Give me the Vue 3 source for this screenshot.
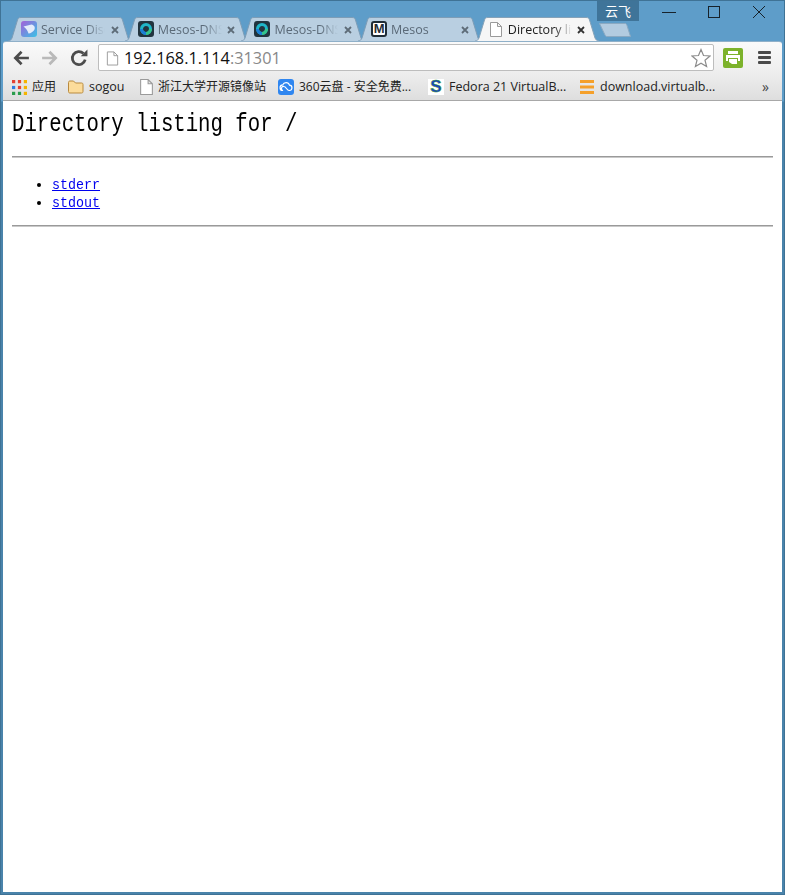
<script setup>
const tabs = [
  { title: 'Service Discovery', icon: 'service' },
  { title: 'Mesos-DNS', icon: 'dns' },
  { title: 'Mesos-DNS', icon: 'dns' },
  { title: 'Mesos', icon: 'mesos' },
  { title: 'Directory listing for /', icon: 'doc', active: true }
]
const bookmarks = [
  { label: '应用', icon: 'apps', width: 56, cjk: true },
  { label: 'sogou', icon: 'folder', width: 72 },
  { label: '浙江大学开源镜像站', icon: 'doc', width: 138, cjk: true },
  { label: '360云盘 - 安全免费...', icon: 'cloud', width: 150, cjk: true },
  { label: 'Fedora 21 VirtualB...', icon: 'fedora', width: 151 },
  { label: 'download.virtualb...', icon: 'stack', width: 140 }
]
const appColors = ['#e34133', '#e34133', '#f5b400', '#2f7de1', '#e34133', '#f5b400', '#2b9d4c', '#2b9d4c', '#f5b400']
const files = ['stderr', 'stdout']
</script>

<template>
  <div class="window">
    <div class="caption">
      <div class="tabstrip">
        <div v-for="(tab, i) in tabs" :key="i" class="tab" :class="{ active: tab.active }">
          <svg class="tab-bg" viewBox="0 0 124 24" preserveAspectRatio="none">
            <path d="M0 24C2 24 3 23 4 21L9.500 3C10 1 11 .5 13 .5H111C113 .5 114 1 114.500 3L120 21C121 23 122 24 124 24" />
          </svg>
          <svg v-if="tab.icon === 'service'" class="ico" viewBox="0 0 16 16">
            <defs>
              <linearGradient id="svc" x1="0" y1="0" x2="1" y2="1">
                <stop offset="0" stop-color="#a45fd8" />
                <stop offset="1" stop-color="#39c3e6" />
              </linearGradient>
            </defs>
            <rect width="16" height="16" rx="3" fill="url(#svc)" />
            <path d="M2.500 5.500L10.500 3.500C13 4 14.500 6 13.500 8.500C12.500 10.500 9.500 12.500 7.500 12.500C7 10 5 7.500 2.500 5.500Z" fill="#e4ecfb" />
          </svg>
          <svg v-else-if="tab.icon === 'dns'" class="ico" viewBox="0 0 16 16">
            <rect width="16" height="16" rx="3" fill="#22343f" />
            <circle cx="8" cy="8" r="4.500" fill="none" stroke="#1fb6c9" stroke-width="3" />
            <path d="M3.500 8A4.500 4.500 0 0 0 8 12.500" fill="none" stroke="#1d7fd6" stroke-width="3" />
            <path d="M8 12.500A4.500 4.500 0 0 0 12.500 8" fill="none" stroke="#35c48a" stroke-width="3" />
          </svg>
          <span v-else-if="tab.icon === 'mesos'" class="ico m-ico">M</span>
          <svg v-else class="ico" viewBox="0 0 16 16">
            <path d="M2.500 1.500H9.500L13.500 5.500V15.500H2.500ZM9.500 1.500V5.500H13.500" fill="#fff" stroke="#9a9a9a" />
          </svg>
          <span class="tab-title">{{ tab.title }}</span>
          <svg class="tab-close" viewBox="0 0 8 8">
            <path d="M1 1L7 7M7 1L1 7" stroke-width="1.800" />
          </svg>
        </div>
        <svg class="newtab" viewBox="0 0 32 14">
          <path d="M.5 .5H26C27 .5 27.500 1 28 2.500L31.500 13.500H8C7 13.500 6.500 13 6 12Z" />
        </svg>
      </div>
      <div class="account">云飞</div>
      <div class="controls">
        <svg viewBox="0 0 14 14"><path d="M0 7.500H14" /></svg>
        <svg viewBox="0 0 14 14"><rect x="1.500" y="1.500" width="11" height="11" /></svg>
        <svg viewBox="0 0 14 14"><path d="M1 1L13 13M13 1L1 13" /></svg>
      </div>
    </div>

    <div class="toolbar">
      <svg class="nav back" viewBox="0 0 16 16"><path d="M15 8H3M8.500 2.500L3 8L8.500 13.500" /></svg>
      <svg class="nav forward" viewBox="0 0 16 16"><path d="M1 8H13M7.500 2.500L13 8L7.500 13.500" /></svg>
      <svg class="nav reload" viewBox="0 0 16 16">
        <path d="M13.500 9.500A5.800 5.800 0 1 1 12 4" />
        <path class="fill" d="M9.500 6.500H15.500V.5Z" />
      </svg>
      <div class="omnibox">
        <svg class="ico omni-doc" viewBox="0 0 16 16">
          <path d="M2.500 1.500H9.500L13.500 5.500V15.500H2.500ZM9.500 1.500V5.500H13.500" fill="#fff" stroke="#9a9a9a" />
        </svg>
        <span class="url">192.168.1.114<span class="port">:31301</span></span>
        <svg class="star" viewBox="0 0 20 20">
          <path d="M10 1.500L12.500 7.500L19 8L14 12.200L15.600 18.600L10 15.200L4.400 18.600L6 12.200L1 8L7.500 7.500Z" />
        </svg>
      </div>
      <svg class="ext" viewBox="0 0 20 20">
        <rect width="20" height="20" rx="2" fill="#7cb22b" />
        <path d="M5 3H15V6H5ZM3 7H17V13H15V10H5V13H3ZM6 11H14V16H9L6 14Z" fill="#fff" />
      </svg>
      <div class="menu"><i></i><i></i><i></i></div>
    </div>

    <div class="bookmarks">
      <div v-for="b in bookmarks" :key="b.label" class="bm" :style="{ width: b.width + 'px' }">
        <svg v-if="b.icon === 'apps'" class="bm-ico apps" viewBox="0 0 14 14">
          <rect v-for="(c, i) in appColors" :key="i" :x="(i % 3) * 5.500" :y="Math.floor(i / 3) * 5.500" width="3" height="3" :fill="c" />
        </svg>
        <svg v-else-if="b.icon === 'folder'" class="bm-ico" viewBox="0 0 16 16">
          <path d="M.5 3.500C.5 2.500 1 2 2 2H5.500L7.500 4H13.500C14.500 4 15 4.500 15 5.500V12.500C15 13.500 14.500 14 13.500 14H2C1 14 .5 13.500 .5 12.500Z" fill="#fcdc9b" stroke="#b98a3e" />
        </svg>
        <svg v-else-if="b.icon === 'doc'" class="bm-ico doc" viewBox="2 1 12 15">
          <path d="M2.500 1.500H9.500L13.500 5.500V15.500H2.500ZM9.500 1.500V5.500H13.500" fill="#fff" stroke="#9a9a9a" />
        </svg>
        <svg v-else-if="b.icon === 'cloud'" class="bm-ico" viewBox="0 0 16 16">
          <rect width="16" height="16" rx="3" fill="#2f86f0" />
          <path d="M5 11.500A2.800 2.800 0 0 1 4.700 5.900A3.600 3.600 0 0 1 11.500 6.100A2.700 2.700 0 0 1 11 11.500C9 11.500 8 7.500 6 7.500A2 2 0 0 0 5 11.500Z" fill="none" stroke="#fff" stroke-width="1.200" />
        </svg>
        <span v-else-if="b.icon === 'fedora'" class="bm-ico s-ico">S</span>
        <svg v-else class="bm-ico" viewBox="0 0 16 16">
          <path d="M1 2.500H15M1 8H15M1 13.500H15" stroke="#f5a02a" stroke-width="3" />
        </svg>
        <span class="bm-label" :class="{ cjk: b.cjk }">{{ b.label }}</span>
      </div>
      <span class="more">»</span>
    </div>

    <main class="page">
      <h1><span class="h1-text">Directory listing for /</span></h1>
      <hr />
      <ul>
        <li v-for="f in files" :key="f"><a href="#">{{ f }}</a></li>
      </ul>
      <hr />
    </main>
  </div>
</template>

<style scoped>
.window {
  width: 785px;
  height: 895px;
  box-sizing: border-box;
  padding: 0 2px 2px;
  background: linear-gradient(#5e9dc9 100px, #4a84ab 101px);
  border: 1px solid #3f7396;
  display: flex;
  flex-direction: column;
  overflow: hidden;
}
.caption {
  height: 40px;
  display: flex;
  position: relative;
  flex: none;
}
.tabstrip {
  display: flex;
  align-items: flex-start;
  padding: 16px 0 0 5px;
  height: 24px;
}
.tab {
  position: relative;
  width: 124px;
  height: 24px;
  margin-right: -7.300px;
  box-sizing: border-box;
  padding: 4px 0 0 13px;
  display: flex;
  align-items: flex-start;
  flex: none;
}
.tab.active { z-index: 2; }
.tab-bg {
  position: absolute;
  inset: 0;
  width: 100%;
  height: 100%;
}
.tab-bg path {
  fill: #b9cfe1;
  stroke: #7d9db7;
  stroke-width: 1;
}
.tab.active .tab-bg path { fill: #f6f6f6; stroke: #86a2b8; }
.ico {
  position: relative;
  width: 16px;
  height: 16px;
  flex: none;
}
.m-ico {
  box-sizing: border-box;
  background: #fff;
  border: 2px solid #1f2c36;
  border-radius: 3px;
  color: #1f2c36;
  font: 700 13px/12px "Liberation Sans", sans-serif;
  text-align: center;
}
.tab-title {
  position: relative;
  margin: 1px 0 0 4px;
  width: 64px;
  height: 16px;
  overflow: hidden;
  white-space: nowrap;
  font: 12.500px/16px "Open Sans", "Noto Sans", sans-serif;
  color: #5b6a78;
  -webkit-mask-image: linear-gradient(to right, #000 72%, transparent);
  mask-image: linear-gradient(to right, #000 72%, transparent);
}
.tab.active .tab-title { color: #222; }
.tab-close {
  position: relative;
  width: 8px;
  height: 8px;
  margin: 5px 0 0 5.500px;
  flex: none;
  fill: none;
  stroke: #5e6c78;
}
.tab.active .tab-close { stroke: #333; }
.newtab {
  position: relative;
  width: 32px;
  height: 14px;
  margin: 6px 0 0 7px;
  flex: none;
}
.newtab path { fill: #b2cbe0; stroke: #8aa9c2; }
.account {
  position: absolute;
  left: 594px;
  top: 0;
  width: 42px;
  height: 20px;
  background: #3f7499;
  color: #fff;
  font: 13px/20px "Noto Sans CJK SC", sans-serif;
  text-align: center;
}
.controls {
  position: absolute;
  top: 4px;
  right: 16px;
  display: flex;
  gap: 31px;
}
.controls svg {
  width: 14px;
  height: 14px;
  fill: none;
  stroke: #17222a;
  stroke-width: 1;
}
.toolbar {
  height: 31px;
  flex: none;
  display: flex;
  align-items: center;
  background: linear-gradient(#fafafa, #eeeeee);
  border-top: 1px solid #8fb0c9;
  border-radius: 3px 3px 0 0;
  padding: 1px 9px 0;
  position: relative;
  box-sizing: border-box;
}
.nav {
  width: 18px;
  height: 18px;
  flex: none;
  fill: none;
  stroke: #4c4c4c;
  stroke-width: 2.400;
  margin-right: 11px;
}
.forward { stroke: #b9b9b9; }
.reload { margin-right: 10px; }
.reload .fill { fill: #4c4c4c; stroke: none; }
.omnibox {
  width: 616px;
  height: 27px;
  box-sizing: border-box;
  background: #fff;
  border: 1px solid #bdbdbd;
  border-radius: 2px;
  display: flex;
  align-items: center;
  padding: 0 2px 0 6px;
  flex: none;
}
.omni-doc { width: 15px; height: 16px; }
.url {
  margin-left: 4px;
  flex: 1;
  font: 16.300px/22px "Open Sans", "Noto Sans", sans-serif;
  color: #111;
}
.port { color: #888; }
.star {
  width: 20px;
  height: 20px;
  fill: #fff;
  stroke: #8c8c8c;
  stroke-width: 1.200;
}
.ext {
  width: 20px;
  height: 20px;
  margin-left: 9px;
  flex: none;
}
.menu {
  margin-left: 15px;
  width: 13px;
  display: flex;
  flex-direction: column;
  gap: 2px;
}
.menu i {
  display: block;
  height: 3px;
  background: #4a4a4a;
  border-radius: 1px;
}
.bookmarks {
  height: 28px;
  box-sizing: content-box;
  flex: none;
  display: flex;
  align-items: center;
  padding-left: 9px;
  background: linear-gradient(#eeeeee, #dedede);
  border-bottom: 1px solid #a8a8a8;
}
.bm {
  display: flex;
  align-items: center;
  flex: none;
  gap: 5px;
  padding-top: 2px;
}
.bm-ico {
  width: 16px;
  height: 16px;
  flex: none;
}
.bm-ico.apps { width: 15px; height: 15px; }
.bm-ico.doc { width: 13px; }
.s-ico {
  background: #fff;
  color: #1a3fc4;
  font: 700 17px/16px "Liberation Sans", sans-serif;
  text-align: center;
  -webkit-text-stroke: .5px #3aa020;
}
.bm-label {
  font: 12.500px/16px "Open Sans", "Noto Sans CJK SC", sans-serif;
  color: #222;
  white-space: nowrap;
}
.bm-label.cjk { font-size: 12px; }
.more {
  margin-left: 43px;
  padding-top: 2px;
  font: 14px/16px "Open Sans", sans-serif;
  color: #444;
}
.page {
  flex: 1;
  background: #fff;
  padding: 0 9px;
  min-height: 0;
  color: #000;
}
h1 {
  margin: 0;
  padding-top: 10px;
  height: 47px;
  box-sizing: border-box;
  font: 400 25px/28px "Liberation Mono", monospace;
}
.h1-text {
  display: inline-block;
  white-space: nowrap;
  transform-origin: left center;
  transform: scaleX(.827);
}
hr {
  margin: 8px 0 0;
  height: 2px;
  box-sizing: border-box;
  border: 0;
  border-top: 1px solid #9a9a9a;
  border-bottom: 1px solid #c9c9c9;
}
ul {
  margin: 0;
  padding: 18px 0 13px 40px;
  list-style: disc;
  font: 16px/18px "Liberation Mono", monospace;
}
li { height: 18px; }
ul + hr { margin-top: 0; }
a {
  display: inline-block;
  font-size: 15px;
  line-height: 18px;
  color: #00e;
  text-decoration: underline;
  transform-origin: left center;
  transform: scaleX(.889);
}
</style>

<style>
html, body { margin: 0; padding: 0; background: #5e9dc9; }
</style>
